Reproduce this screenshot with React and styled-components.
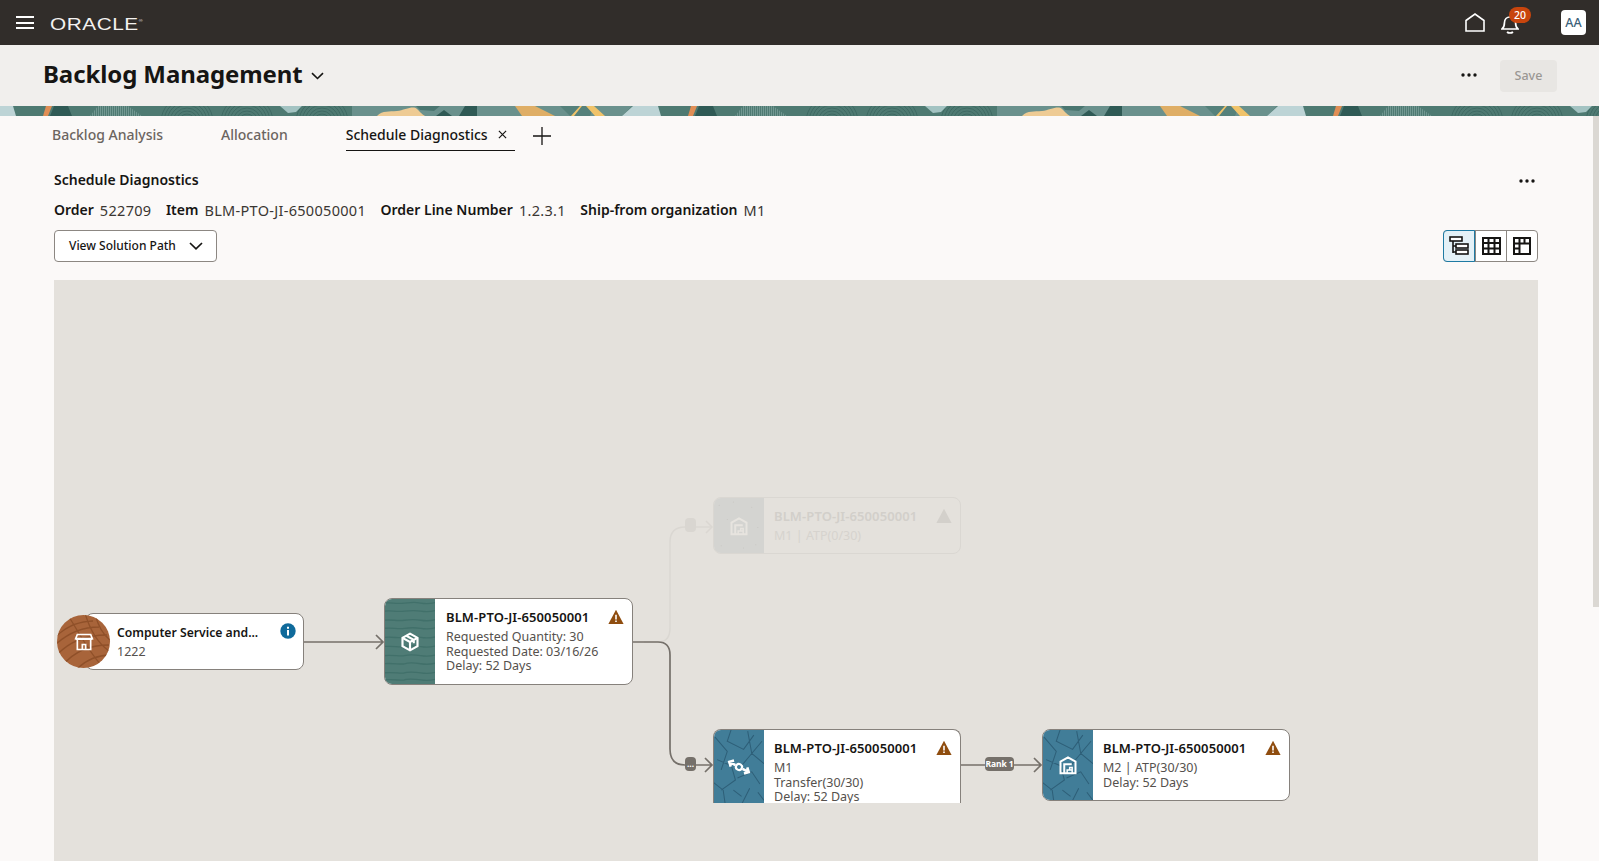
import React from 'react'
import styled, { createGlobalStyle } from 'styled-components'

const GlobalStyle = createGlobalStyle`
  html, body { margin: 0; height: 100%; overflow: hidden; background: #fbf9f8; }
  body { font-family: 'Noto Sans', 'Open Sans', sans-serif; color: #161513; }
  * { box-sizing: border-box; }
`

const Page = styled.div`
  position: relative;
  height: 861px;
  display: flex;
  flex-direction: column;
  overflow: hidden;
`

const TopBar = styled.header`
  height: 45px;
  flex: none;
  background: #312d2a;
  display: flex;
  align-items: center;
  padding: 0 13px 0 16px;
`

const Hamburger = styled.div`
  width: 18px;
  height: 13px;
  margin-right: 16px;
  display: flex;
  flex-direction: column;
  justify-content: space-between;
  span { display: block; height: 2px; background: #fff; }
`

const Logo = styled.div`
  font-family: 'Liberation Sans', sans-serif;
  color: #f4f2f0;
  font-size: 16px;
  letter-spacing: 0.4px;
  line-height: 16px;
  transform: scaleX(1.3);
  transform-origin: left center;
  sup { font-size: 4px; vertical-align: 8px; letter-spacing: 0; }
`

const TopActions = styled.div`
  margin-left: auto;
  display: flex;
  align-items: center;
`

const BellWrap = styled.div`
  position: relative;
  width: 18px;
  height: 20px;
  margin-left: 16px;
  margin-right: 42px;
  margin-top: 2px;
`

const Badge = styled.span`
  position: absolute;
  left: 8px;
  top: -7px;
  width: 22px;
  height: 16px;
  border-radius: 8px;
  background: #c8450d;
  color: #fff;
  font-size: 10.5px;
  font-weight: 500;
  line-height: 16px;
  text-align: center;
`

const Avatar = styled.div`
  width: 25px;
  height: 25px;
  border-radius: 4px;
  background: #fff;
  color: #3c5f78;
  font-size: 12.5px;
  font-weight: 500;
  display: flex;
  align-items: center;
  justify-content: center;
`

const TitleBar = styled.div`
  height: 61px;
  flex: none;
  background: #f1efed;
  display: flex;
  align-items: center;
  padding: 0 42px 0 43px;
`

const Title = styled.h1`
  margin: -3px 0 0;
  font-size: 24px;
  font-weight: 700;
  letter-spacing: -0.1px;
  line-height: 32px;
`

const TitleChevron = styled.svg`
  width: 13px;
  height: 8px;
  margin-left: 8px;
  margin-top: 1px;
`

const TitleActions = styled.div`
  margin-left: auto;
  display: flex;
  align-items: center;
  gap: 23px;
  svg { margin-top: -2px; }
`

const SaveButton = styled.button`
  width: 57px;
  height: 32px;
  border: 0;
  border-radius: 4px;
  background: #e8e6e3;
  color: #9a9793;
  font: 500 12.5px 'Noto Sans', sans-serif;
`

const BannerSvg = styled.svg`
  display: block;
  flex: none;
  width: 100%;
  height: 10px;
`

const Tabs = styled.nav`
  height: 36px;
  flex: none;
  display: flex;
  align-items: flex-start;
  padding-left: 52px;
`

const Tab = styled.div`
  height: 35px;
  margin-right: ${p => (p.$active ? '0' : '58px')};
  padding-top: 8px;
  display: flex;
  gap: 10px;
  font-size: 14px;
  line-height: 22px;
  font-weight: 500;
  color: ${p => (p.$active ? '#161513' : '#6b6560')};
  border-bottom: ${p => (p.$active ? '1.5px solid #161513' : '0')};
  white-space: nowrap;
`

const TabClose = styled.svg`
  width: 9px;
  height: 9px;
  margin: 6px 8px 0 0;
`

const AddTab = styled.svg`
  width: 18px;
  height: 18px;
  margin: 11px 0 0 18px;
`

const Content = styled.main`
  flex: 1;
  min-height: 0;
  display: flex;
  flex-direction: column;
  padding: 18px 61px 0 54px;
`

const SectionHead = styled.div`
  height: 20px;
  display: flex;
  align-items: center;
  justify-content: space-between;
  padding-right: 3px;
  svg { margin-top: 2px; }
`

const SectionTitle = styled.h2`
  margin: 0;
  font-size: 14px;
  font-weight: 600;
  line-height: 20px;
`

const Facts = styled.div`
  height: 20px;
  margin-top: 10px;
  display: flex;
  font-size: 14px;
  line-height: 20px;
  white-space: nowrap;
`

const FactLabel = styled.span`
  font-weight: 600;
  margin-right: 6px;
`

const FactValue = styled.span`
  color: #3a3632;
  font-size: 14.5px;
  letter-spacing: 0.3px;
  margin-right: 14.5px;
`

const Controls = styled.div`
  height: 32px;
  margin-top: 10px;
  display: flex;
  justify-content: space-between;
`

const SelectButton = styled.button`
  width: 163px;
  height: 32px;
  padding: 0 13px 1px 14px;
  display: flex;
  align-items: center;
  justify-content: space-between;
  background: #fff;
  border: 1px solid #8c8782;
  border-radius: 4px;
  color: #161513;
  font: 500 12px 'Noto Sans', sans-serif;
`

const Toggle = styled.div`
  width: 95px;
  height: 32px;
  display: flex;
  border: 1px solid #8c8782;
  border-radius: 4px;
  background: #fff;
`

const ToggleItem = styled.div`
  flex: 1;
  display: flex;
  align-items: center;
  justify-content: center;
  margin: -1px 0;
  border-left: ${p => (p.$first ? '0' : '1px solid #8c8782')};
  ${p => p.$active && `
    margin: -1px 0 -1px -1px;
    border: 1px solid #1e7aa3;
    border-radius: 4px 0 0 4px;
    background: #e4f1f7;
  `}
`

const Canvas = styled.section`
  position: relative;
  margin-top: 18px;
  flex: 1;
  min-height: 0;
  background: #e4e1dc;
  overflow: hidden;
`

const Wires = styled.svg`
  position: absolute;
  inset: 0;
  width: 100%;
  height: 100%;
`

const Node = styled.div`
  position: absolute;
  left: ${p => p.$x}px;
  top: ${p => p.$y}px;
  width: ${p => p.$w}px;
  height: ${p => p.$h}px;
  display: flex;
  background: ${p => (p.$faded ? 'transparent' : '#fff')};
  border: 1px solid ${p => (p.$faded ? '#dad7d2' : '#86817c')};
  border-bottom-width: ${p => (p.$open ? 0 : '1px')};
  border-radius: ${p => (p.$open ? '8px 8px 0 0' : '8px')};
  overflow: hidden;
`

const Swatch = styled.div`
  position: relative;
  width: 51px;
  flex: none;
  display: flex;
  align-items: center;
  justify-content: center;
  background: ${p => p.$color};
  margin: -1px 0 -1px -1px;
`

const Texture = styled.svg`
  position: absolute;
  inset: 0;
  width: 100%;
  height: 100%;
`

const NodeIcon = styled.svg`
  position: relative;
  width: ${p => p.$size || 20}px;
  height: ${p => p.$size || 20}px;
`

const NodeBody = styled.div`
  flex: 1;
  min-width: 0;
  position: relative;
  padding: ${p => p.$top}px 0 0 ${p => p.$left}px;
  color: ${p => (p.$faded ? '#d6d3ce' : '#55514d')};
  font-size: 12.5px;
  line-height: 14.5px;
  white-space: nowrap;
`

const NodeTitle = styled.div`
  font-size: ${p => p.$size || 13}px;
  font-weight: 600;
  letter-spacing: ${p => (p.$size ? 0 : '0.1px')};
  line-height: 16px;
  margin-bottom: ${p => p.$gap}px;
  color: ${p => (p.$faded ? '#d2cfca' : '#161513')};
`

const Corner = styled.svg`
  position: absolute;
  top: ${p => p.$top}px;
  right: ${p => p.$right}px;
  width: 16px;
  height: 16px;
`

const Round = styled.div`
  position: absolute;
  left: 3px;
  top: 335px;
  width: 53px;
  height: 53px;
  border-radius: 50%;
  background: #a8643a;
  overflow: hidden;
  display: flex;
  align-items: center;
  justify-content: center;
`

const Pill = styled.div`
  position: absolute;
  left: ${p => p.$x}px;
  top: ${p => p.$y}px;
  width: ${p => p.$w}px;
  height: 14px;
  border-radius: 4px;
  background: ${p => (p.$faded ? '#d9d6d1' : '#75706a')};
  color: ${p => (p.$faded ? '#ecebe8' : '#fff')};
  font-size: 8.5px;
  font-weight: 700;
  letter-spacing: -0.1px;
  line-height: 13px;
  text-align: center;
  white-space: nowrap;
`

const ScrollThumb = styled.div`
  position: absolute;
  right: 0;
  top: 116px;
  width: 6px;
  height: 491px;
  background: #dbd8d3;
`

const Dots = () => (
  <svg width="16" height="4" viewBox="0 0 16 4" fill="#161513">
    <circle cx="2" cy="2" r="1.7" /><circle cx="8" cy="2" r="1.7" /><circle cx="14" cy="2" r="1.7" />
  </svg>
)

const Warn = ({ top, right, faded }) => (
  <Corner $top={top} $right={right} viewBox="0 0 16 16">
    <path d="M8 .8 15.6 15H.4z" fill={faded ? '#d3d0cb' : '#8f4d0f'} />
    {!faded && <path d="M7.2 5.8h1.6v4.6H7.2zM7.2 11.4h1.6v1.6H7.2z" fill="#fff" />}
  </Corner>
)

const Wave = () => (
  <Texture viewBox="0 0 50 86" preserveAspectRatio="none" fill="none" stroke="#41706a" strokeWidth="1.3">
    {[5, 13, 22, 30, 39, 48, 57, 65, 74, 81].map((y, i) => (
      <path key={y} d={`M0 ${y}c8-1 ${10 + i} 1 20 0s10-1 16 0 10 .5 14-.5`} />
    ))}
  </Texture>
)

const Cracks = () => (
  <Texture viewBox="0 0 50 74" preserveAspectRatio="xMidYMin slice" fill="none" stroke="#2e5f78" strokeWidth="1">
    <path d="M2 8 14 22 8 40M18 0l-4 12 16 8 10-14M34 2l4 22-10 12M48 12 38 24l12 10M4 30l14 6 4 14-14 10M0 52l10 8 2 14M24 48l14-6 8 12M36 58l-8 16M44 62l6 8M20 60l8 6" />
  </Texture>
)

const Specks = () => (
  <Texture viewBox="0 0 50 56" fill="#c6c4c0">
    {[[6, 8], [20, 5], [38, 10], [44, 30], [8, 48], [30, 50], [14, 22], [42, 47]].map(([cx, cy]) => (
      <circle key={cx + '-' + cy} cx={cx} cy={cy} r=".5" />
    ))}
  </Texture>
)

const Rings = () => (
  <Texture viewBox="0 0 53 53" fill="none" stroke="#8f5029" strokeWidth="1.3">
    <path d="M-4 24c12-12 26-18 40-18M-4 32c12-12 28-20 46-20M-2 42c12-14 30-22 52-22M6 50c10-12 26-20 46-20M20 54c8-8 20-14 34-14M28-2c4 14 10 28 24 38M38-2c2 10 6 20 16 28M12 2c8 12 20 36 34 50" />
  </Texture>
)

const WarehouseIcon = ({ color }) => (
  <NodeIcon viewBox="0 0 24 24" fill="none" stroke={color} strokeWidth="2.4">
    <path d="M3 22V8L12 3l9 5v14z" />
    <path d="M7.500 22V11h9" />
    <path d="M11 22v-4h6v4M14 18v-3h3v3" strokeWidth="1.8" />
  </NodeIcon>
)

const BANNER_DARK = '#2f5a55'

const Banner = () => (
  <BannerSvg aria-hidden="true">
    <defs>
      <pattern id="hatch" width="2" height="10" patternUnits="userSpaceOnUse">
        <path d="M0 0v10" stroke="#a6c3c0" strokeWidth=".8" />
      </pattern>
      <pattern id="bannerTile" width="645" height="10" patternUnits="userSpaceOnUse">
        <rect width="645" height="10" fill="#4e7a72" />
        <path d="M352 0h280l-10 10H352z" fill="#6a918d" />
        <path d="M0 0h13l3 10H0z" fill="#bdd4d6" />
        <path d="M622 10 633 0h12v10z" fill="#bdd4d6" />
        <path d="M46 0h6l-4 10h-5z" fill="#e08e55" />
        <path d="M50 10 54 0h14l4 10z" fill={BANNER_DARK} />
        <path d="M90 10 98 0h30l14 10z" fill="url(#hatch)" />
        <g fill="none" stroke="#37625c" strokeWidth=".7">
          {[165, 225, 300].map(cx => [8, 11, 14, 17, 20, 23, 26].map(r => (
            <circle key={cx + '-' + r} cx={cx + 22} cy="16" r={r} />
          )))}
        </g>
        <path d="M280 0h22l-6 6-8 1z" fill="#a3c3c2" />
        <path d="M377 10c6-6 12-4 20-5s16-6 20-2 5 5 8 7z" fill="#eecb94" />
        <path d="M416 0h24l-6 5-14-1z" fill="#4a7670" />
        <path d="M436 10l8-6 8 6z" fill={BANNER_DARK} />
        <path d="M459 10l6-10h12v10z" fill={BANNER_DARK} />
        <path d="M515 0h20l20 10H522z" fill="#dfae66" />
        <path d="M560 0h34l-4 10h-20z" fill="#55817b" />
        <path d="M571 10l9-10h2l-8 10zM586 0h8l11 10h-10z" fill="#f0c36a" />
      </pattern>
    </defs>
    <rect width="100%" height="10" fill="url(#bannerTile)" />
  </BannerSvg>
)

const App = () => (
  <Page>
    <GlobalStyle />
    <TopBar>
      <Hamburger><span /><span /><span /></Hamburger>
      <Logo>ORACLE<sup>®</sup></Logo>
      <TopActions>
        <svg width="20" height="19" viewBox="0 0 20 19" fill="none" stroke="#fff" strokeWidth="1.6">
          <path d="M1 18V7.500L10 1l9 6.500V18z" />
        </svg>
        <BellWrap>
          <svg width="18" height="20" viewBox="0 0 18 20" fill="none" stroke="#fff" strokeWidth="1.7">
            <path d="M1 15c2-1.500 2.400-3.400 2.400-6C3.400 5.500 5.800 3 9 3s5.600 2.500 5.600 6c0 2.600.4 4.500 2.400 6z" />
            <path d="M6 18c1.500 1.300 4.500 1.300 6 0" />
          </svg>
          <Badge>20</Badge>
        </BellWrap>
        <Avatar>AA</Avatar>
      </TopActions>
    </TopBar>

    <TitleBar>
      <Title>Backlog Management</Title>
      <TitleChevron viewBox="0 0 13 8" fill="none" stroke="#161513" strokeWidth="1.6">
        <path d="M1 1.200 6.500 6.500 12 1.200" />
      </TitleChevron>
      <TitleActions>
        <Dots />
        <SaveButton disabled>Save</SaveButton>
      </TitleActions>
    </TitleBar>

    <Banner />

    <Tabs>
      <Tab>Backlog Analysis</Tab>
      <Tab>Allocation</Tab>
      <Tab $active>
        Schedule Diagnostics
        <TabClose viewBox="0 0 10 10" stroke="#161513" strokeWidth="1.300"><path d="M1 1l8 8M9 1 1 9" /></TabClose>
      </Tab>
      <AddTab viewBox="0 0 18 18" stroke="#161513" strokeWidth="1.300"><path d="M9 0v18M0 9h18" /></AddTab>
    </Tabs>

    <Content>
      <SectionHead>
        <SectionTitle>Schedule Diagnostics</SectionTitle>
        <Dots />
      </SectionHead>
      <Facts>
        <FactLabel>Order</FactLabel><FactValue>522709</FactValue>
        <FactLabel>Item</FactLabel><FactValue>BLM-PTO-JI-650050001</FactValue>
        <FactLabel>Order Line Number</FactLabel><FactValue>1.2.3.1</FactValue>
        <FactLabel>Ship-from organization</FactLabel><FactValue>M1</FactValue>
      </Facts>
      <Controls>
        <SelectButton>
          View Solution Path
          <svg width="14" height="8" viewBox="0 0 14 8" fill="none" stroke="#161513" strokeWidth="1.700"><path d="M1 1l6 5.800L13 1" /></svg>
        </SelectButton>
        <Toggle>
          <ToggleItem $first $active>
            <svg width="20" height="20" viewBox="0 0 20 20" fill="#fff" stroke="#161513" strokeWidth="1.600">
              <path d="M4 5v12M4 10h4M4 16h4" fill="none" />
              <rect x="1" y="1" width="12" height="4" /><rect x="7" y="8" width="12" height="4" /><rect x="7" y="14" width="12" height="4" />
            </svg>
          </ToggleItem>
          <ToggleItem>
            <svg width="19" height="18" viewBox="0 0 19 18" fill="none" stroke="#161513" strokeWidth="2">
              <rect x="1" y="1" width="17" height="16" /><path d="M1 6h17M1 11.500h17M6.500 1v16M12.500 1v16" />
            </svg>
          </ToggleItem>
          <ToggleItem>
            <svg width="18" height="18" viewBox="0 0 18 18" fill="none" stroke="#161513" strokeWidth="2">
              <rect x="1" y="1" width="16" height="16" /><path d="M1 6.500h16M6.500 1v16M11.500 1v5.500M1 11.500h5.500" />
            </svg>
          </ToggleItem>
        </Toggle>
      </Controls>

      <Canvas>
        <Wires fill="none">
          <g stroke="#dad7d2" strokeWidth="1.500">
            <path d="M590 362h14c8 0 12-5 12-14V262c0-10 5-15 15-15h26" />
            <path d="M652 241l6 6-6 6" />
          </g>
          <g stroke="#75706a" strokeWidth="1.700">
            <path d="M249 362h80M322 355l7 7-7 7" />
            <path d="M579 362h25c8 0 12 5 12 13v94c0 11 5 16 15 16h27M651 478l7 7-7 7" />
            <path d="M907 485h80M980 478l7 7-7 7" />
          </g>
        </Wires>

        <Node $x={31} $y={333} $w={219} $h={57}>
          <NodeBody $top={11} $left={31}>
            <NodeTitle $size={12.2} $gap={4}>Computer Service and...</NodeTitle>
            1222
          </NodeBody>
          <Corner $top={9} $right={7} viewBox="0 0 16 16">
            <circle cx="8" cy="8" r="7.700" fill="#0f6a9b" />
            <path d="M7 7h2v5.500H7zM7 3.800h2v1.900H7z" fill="#fff" />
          </Corner>
        </Node>
        <Round>
          <Rings />
          <NodeIcon viewBox="0 0 24 24" fill="none" stroke="#fff" strokeWidth="2">
            <path d="M4 3h16l2 5H2zM4 8v13h16V8M2 8.500h20" />
            <path d="M10 21v-6h4v6" />
          </NodeIcon>
        </Round>

        <Node $x={330} $y={318} $w={249} $h={87}>
          <Swatch $color="#4f7c76">
            <Wave />
            <NodeIcon viewBox="0 0 24 24" fill="none" stroke="#fff" strokeWidth="2.600">
              <path d="M12 2 21 7v10l-9 5-9-5V7z" />
              <path d="M3 7l9 5 9-5M12 12v10M7.500 4.500l9 5v4" />
            </NodeIcon>
          </Swatch>
          <NodeBody $top={10} $left={11}>
            <NodeTitle $gap={5}>BLM-PTO-JI-650050001</NodeTitle>
            Requested Quantity: 30<br />Requested Date: 03/16/26<br />Delay: 52 Days
          </NodeBody>
          <Warn top={10} right={8} />
        </Node>

        <Node $faded $x={659} $y={217} $w={248} $h={57}>
          <Swatch $color="#d4d4d1">
            <Specks />
            <WarehouseIcon color="#e7e4df" />
          </Swatch>
          <NodeBody $faded $top={10} $left={10}>
            <NodeTitle $faded $gap={5}>BLM-PTO-JI-650050001</NodeTitle>
            M1 | ATP(0/30)
          </NodeBody>
          <Warn top={10} right={8} faded />
        </Node>
        <Pill $faded $x={631} $y={238} $w={11} />

        <Node $open $x={659} $y={449} $w={248} $h={74}>
          <Swatch $color="#417d98">
            <Cracks />
            <NodeIcon $size={24} viewBox="0 0 24 24" fill="none" stroke="#fff" strokeWidth="2.600">
              <g transform="rotate(28 12 12)">
                <circle cx="12" cy="12" r="3" strokeWidth="2.200" />
                <path d="M8 12H1M4.500 8.500 1 12l3.500 3.500M16 12h7M19.500 8.500 23 12l-3.500 3.500" />
              </g>
            </NodeIcon>
          </Swatch>
          <NodeBody $top={10} $left={10}>
            <NodeTitle $gap={5}>BLM-PTO-JI-650050001</NodeTitle>
            M1<br />Transfer(30/30)<br />Delay: 52 Days
          </NodeBody>
          <Warn top={10} right={8} />
        </Node>
        <Pill $x={631} $y={477} $w={11}>...</Pill>
        <Pill $x={931} $y={477} $w={29}>Rank 1</Pill>

        <Node $x={988} $y={449} $w={248} $h={72}>
          <Swatch $color="#417d98">
            <Cracks />
            <WarehouseIcon color="#fff" />
          </Swatch>
          <NodeBody $top={10} $left={10}>
            <NodeTitle $gap={5}>BLM-PTO-JI-650050001</NodeTitle>
            M2 | ATP(30/30)<br />Delay: 52 Days
          </NodeBody>
          <Warn top={10} right={8} />
        </Node>
      </Canvas>
    </Content>
    <ScrollThumb />
  </Page>
)

export default App
